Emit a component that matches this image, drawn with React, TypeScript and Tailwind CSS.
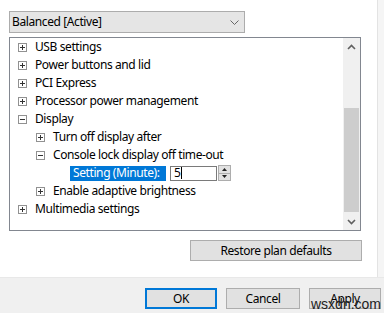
import React from 'react';

const font = { fontFamily: '"Noto Sans", "Open Sans", sans-serif', letterSpacing: '-0.4px' };

const ExpandBox = ({ open }: { open?: boolean }) => (
  <svg width="9" height="9" viewBox="0 0 9 9" className="shrink-0">
    <rect x="0.5" y="0.5" width="8" height="8" fill="#fff" stroke="#919191" />
    <path d="M2 4.5h5" stroke="#333" />
    {!open && <path d="M4.5 2v5" stroke="#333" />}
  </svg>
);

const rows = [
  { label: 'USB settings', level: 0 },
  { label: 'Power buttons and lid', level: 0 },
  { label: 'PCI Express', level: 0 },
  { label: 'Processor power management', level: 0 },
  { label: 'Display', level: 0, open: true },
  { label: 'Turn off display after', level: 1 },
  { label: 'Console lock display off time-out', level: 1, open: true },
  { label: 'setting', level: 2 },
  { label: 'Enable adaptive brightness', level: 1 },
  { label: 'Multimedia settings', level: 0 },
];

const TreeRow = ({ row }: { row: (typeof rows)[0] }) => {
  if (row.label === 'setting') {
    return (
      <div className="flex h-[18px] items-center pl-[60px]">
        <span className="flex h-[15px] w-[96px] items-center bg-[#0078d7] pl-[3px] text-white">
          Setting (Minute):
        </span>
        <div className="ml-[4px] flex h-[15px] w-[47px] items-center border border-[#7a7a7a] bg-white pl-[3px]">
          5<span className="ml-[1px] h-[12px] w-px bg-black" />
        </div>
        <div className="ml-px flex h-[16px] w-[13px] flex-col border border-[#adadad] bg-[#e1e1e1]">
          <div className="flex flex-1 items-center justify-center border-b border-[#adadad]">
            <svg width="5" height="3" viewBox="0 0 5 3"><path d="M0 3h5L2.5 0z" fill="#222" /></svg>
          </div>
          <div className="flex flex-1 items-center justify-center">
            <svg width="5" height="3" viewBox="0 0 5 3"><path d="M0 0h5L2.5 3z" fill="#222" /></svg>
          </div>
        </div>
      </div>
    );
  }
  return (
    <div className={`flex h-[18px] items-center gap-[8px] ${row.level === 0 ? 'pl-[8px]' : 'pl-[26px]'}`}>
      <ExpandBox open={row.open} />
      <span className="whitespace-nowrap">{row.label}</span>
    </div>
  );
};

const Button = ({ children, w, focused }: { children: React.ReactNode; w: string; focused?: boolean }) => (
  <div
    className={`flex h-[21px] items-center justify-center bg-[#e1e1e1] text-[12px] text-black ${w} ${
      focused ? 'border-2 border-[#0078d7]' : 'border border-[#adadad]'
    }`}
  >
    {children}
  </div>
);

export default function App() {
  return (
    <div className="relative flex h-[313px] w-[384px] flex-col overflow-hidden bg-white text-[12px] text-black" style={font}>
      <div className="flex h-[277px]">
        <div className="flex w-[377px] flex-col pl-[9px] pt-[11px]">
          <div className="flex h-[22px] w-[236px] items-center justify-between border border-[#acacac] bg-[#e5e5e5] pl-[2px] pr-[5px]">
            <span>Balanced [Active]</span>
            <svg width="9" height="5" viewBox="0 0 9 5"><path d="M0.5 0.5l4 4 4-4" stroke="#666" fill="none" /></svg>
          </div>
          <div className="mt-[4px] flex h-[194px] w-[352px] border border-[#828790]">
            <div className="flex-1 overflow-hidden">
              {rows.map((r) => (
                <TreeRow key={r.label} row={r} />
              ))}
            </div>
            <div className="flex w-[17px] flex-col bg-[#f0f0f0]">
              <div className="flex h-[17px] items-center justify-center">
                <svg width="9" height="6" viewBox="0 0 9 6"><path d="M1 5l3.5-3.5L8 5" stroke="#606060" strokeWidth="1.6" fill="none" /></svg>
              </div>
              <div className="mx-[1px] mt-[53px] h-[104px] bg-[#cdcdcd]" />
              <div className="flex-1" />
              <div className="flex h-[17px] items-center justify-center">
                <svg width="9" height="6" viewBox="0 0 9 6"><path d="M1 1l3.5 3.5L8 1" stroke="#606060" strokeWidth="1.6" fill="none" /></svg>
              </div>
            </div>
          </div>
          <div className="mt-[9px] flex justify-end pr-[15px]">
            <Button w="w-[172px]">Restore plan defaults</Button>
          </div>
        </div>
        <div className="w-px bg-[#e3e3e3]" />
        <div className="flex-1 bg-[#f5f5f5]" />
      </div>
      <div className="flex flex-1 items-start gap-[9px] border-t border-[#e8e8e8] bg-[#f0f0f0] pl-[145px] pt-[10px]">
        <Button w="w-[72px]" focused>OK</Button>
        <Button w="w-[74px]">Cancel</Button>
        <Button w="w-[72px]">Apply</Button>
      </div>
      <span
        className="absolute left-[311px] top-[297px] text-[14px] leading-none text-[#222]"
        style={{ fontFamily: '"Liberation Sans", Arial, sans-serif', letterSpacing: '0' }}
      >
        wsxdn.com
      </span>
    </div>
  );
}
